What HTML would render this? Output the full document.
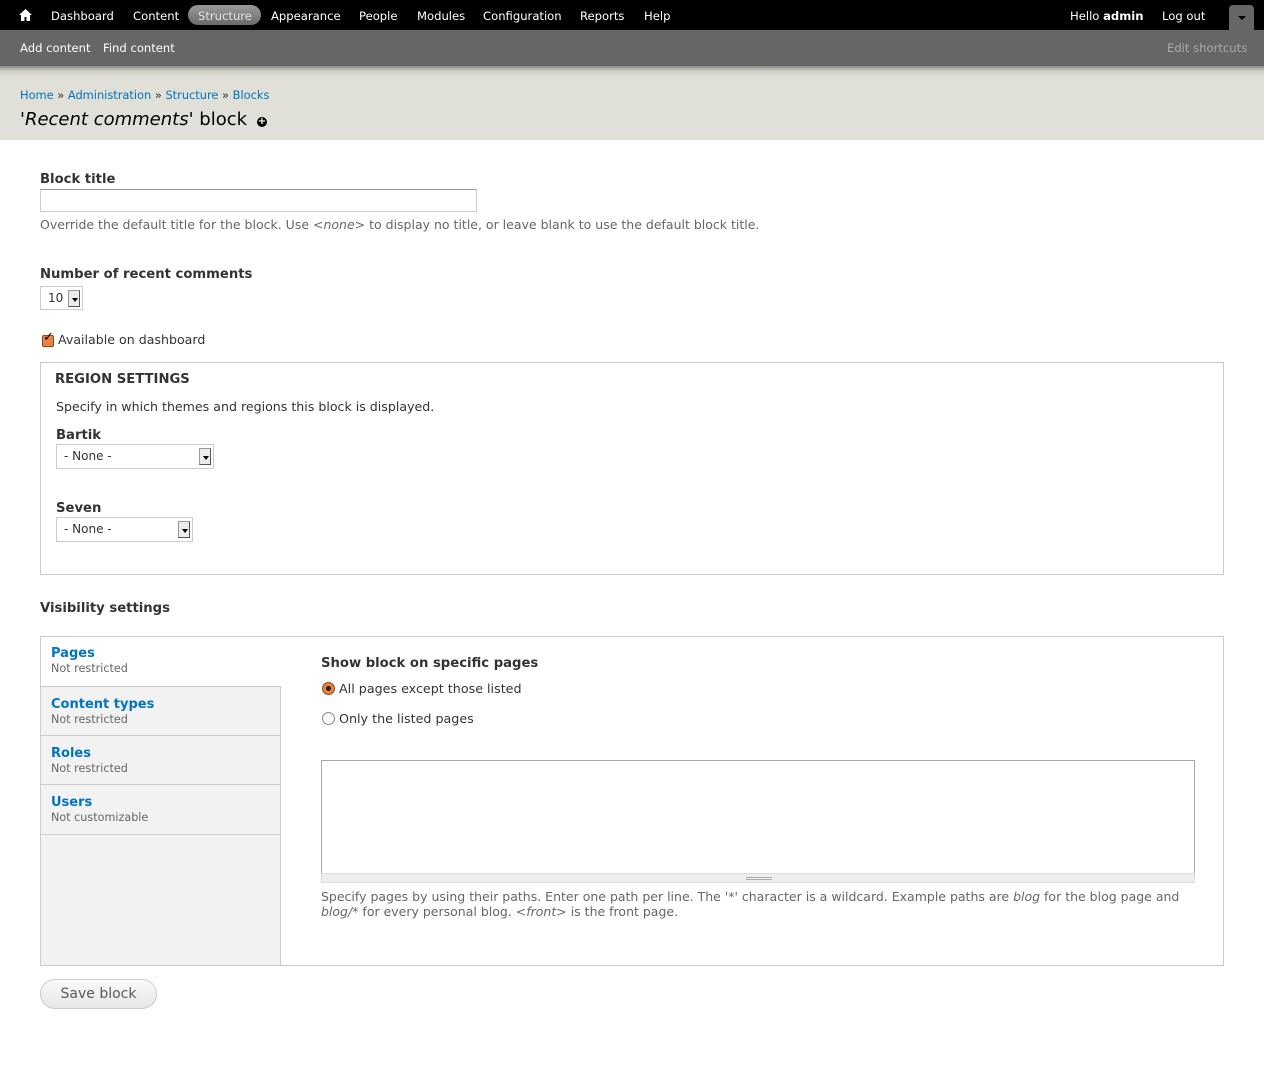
<!DOCTYPE html>
<html><head><style>
*{box-sizing:border-box}
body{margin:0;width:1264px;height:1076px;background:#fff;font-family:"DejaVu Sans","Liberation Sans",sans-serif;color:#333;font-size:13px;position:relative;overflow:hidden}
.a{position:absolute;white-space:nowrap}
#tb{position:absolute;left:0;top:0;width:1264px;height:30px;background:#000}
#tb .a{color:#fff;font-size:11.6px;top:9px}
#sc{position:absolute;left:0;top:30px;width:1264px;height:36px;background:#666}
#sh{position:absolute;left:0;top:66px;width:1264px;height:74px;background:linear-gradient(#8a8a86 0,#cfcfc8 5px,#e0e0d8 12px,#e0e0d8 100%)}
.lbl{font-weight:bold;font-size:13.2px;color:#333}
.desc{font-size:12.5px;color:#666}
.sel{position:absolute;border:1px solid #ccc;background:#fff;font-size:12px;color:#333}
.sel .ar{position:absolute;right:2px;top:3px;width:12px;height:17px;background:#ececec;border:1px solid #999;border-right-color:#555;border-bottom-color:#555}
.sel .ar:after{content:"";position:absolute;left:3px;top:7px;border-left:3px solid transparent;border-right:3px solid transparent;border-top:4px solid #000}
.tab{position:absolute;left:41px;width:240px;border-top:1px solid #ccc;background:#f2f2f2;padding:10px 10px 8px}
.tab b{color:#0074bd;font-size:13px;display:block}
.tab span{font-size:11.2px;color:#666}
</style></head><body>
<div id="tb">
<svg class="a" style="left:19px;top:9px" width="13" height="12" viewBox="0 0 13 12"><path d="M6.5 0L0 6h2v6h3.5V8h2v4H11V6h2z" fill="#fff"/></svg>
<div class="a" style="left:51px">Dashboard</div>
<div class="a" style="left:133px">Content</div>
<div class="a" style="left:188px;top:5px;width:73px;height:20px;border-radius:10px;background:linear-gradient(#9a9a9a,#6a6a6a);"></div>
<div class="a" style="left:198px;color:#e4e4e4">Structure</div>
<div class="a" style="left:271px">Appearance</div>
<div class="a" style="left:359px">People</div>
<div class="a" style="left:417px">Modules</div>
<div class="a" style="left:483px">Configuration</div>
<div class="a" style="left:580px">Reports</div>
<div class="a" style="left:644px">Help</div>
<div class="a" style="left:1070px">Hello <b>admin</b></div>
<div class="a" style="left:1162px">Log out</div>
<div class="a" style="left:1229px;top:5px;width:25px;height:25px;background:#666;border-radius:4px 4px 0 0"></div>
<div class="a" style="left:1238px;top:16px;border-left:4px solid transparent;border-right:4px solid transparent;border-top:4px solid #000"></div>
</div>
<div id="sc">
<div class="a" style="left:20px;top:11px;color:#fff;font-size:11.6px">Add content</div>
<div class="a" style="left:103px;top:11px;color:#fff;font-size:11.6px">Find content</div>
<div class="a" style="left:1167px;top:11px;color:#aaa;font-size:11.6px">Edit shortcuts</div>
</div>
<div id="sh"></div>
<div class="a" style="left:20px;top:88px;font-size:11.4px;color:#333"><span style="color:#0074bd">Home</span> » <span style="color:#0074bd">Administration</span> » <span style="color:#0074bd">Structure</span> » <span style="color:#0074bd">Blocks</span></div>
<div class="a" style="left:20px;top:109px;font-size:18px;color:#000">'<i>Recent comments</i>' block</div>
<div class="a" style="left:257px;top:117px;width:10px;height:10px;border-radius:50%;background:#000;color:#fff;font-size:10px;line-height:10px;text-align:center;font-weight:bold">+</div>

<div class="a lbl" style="left:40px;top:172px">Block title</div>
<div class="a" style="left:40px;top:189px;width:437px;height:23px;border:1px solid #ccc;border-top-color:#999"></div>
<div class="a desc" style="left:40px;top:217px">Override the default title for the block. Use <i>&lt;none&gt;</i> to display no title, or leave blank to use the default block title.</div>

<div class="a lbl" style="left:40px;top:267px">Number of recent comments</div>
<div class="sel" style="left:40px;top:286px;width:43px;height:24px"><span class="a" style="left:7px;top:4px">10</span><div class="ar"></div></div>

<div class="a" style="left:42px;top:335px;width:12px;height:12px;background:#e8823e;border:1px solid #8a4a20;border-radius:2px"></div>
<div class="a" style="left:43px;top:330px;font-size:13px;color:#000;font-weight:bold">✓</div>
<div class="a" style="left:58px;top:332px;font-size:12.6px">Available on dashboard</div>

<div class="a" style="left:40px;top:362px;width:1184px;height:213px;border:1px solid #ccc"></div>
<div class="a lbl" style="left:55px;top:372px">REGION SETTINGS</div>
<div class="a" style="left:56px;top:399px;font-size:12.6px">Specify in which themes and regions this block is displayed.</div>
<div class="a lbl" style="left:56px;top:428px">Bartik</div>
<div class="sel" style="left:56px;top:444px;width:158px;height:25px"><span class="a" style="left:7px;top:4px">- None -</span><div class="ar"></div></div>
<div class="a lbl" style="left:56px;top:501px">Seven</div>
<div class="sel" style="left:56px;top:517px;width:137px;height:25px"><span class="a" style="left:7px;top:4px">- None -</span><div class="ar"></div></div>

<div class="a lbl" style="left:40px;top:601px">Visibility settings</div>
<div class="a" style="left:40px;top:636px;width:1184px;height:330px;border:1px solid #ccc"></div>
<div class="a" style="left:41px;top:637px;width:240px;height:328px;background:#f2f2f2;border-right:1px solid #ccc"></div>
<div class="tab" style="top:637px;height:49px;background:#fff;border-top:none;width:241px;padding-top:9px"><b>Pages</b><span>Not restricted</span></div>
<div class="tab" style="top:686px;height:49px;border-right:1px solid #ccc"><b>Content types</b><span>Not restricted</span></div>
<div class="tab" style="top:735px;height:49px;border-right:1px solid #ccc"><b>Roles</b><span>Not restricted</span></div>
<div class="tab" style="top:784px;height:50px;border-right:1px solid #ccc"><b>Users</b><span>Not customizable</span></div>
<div class="a" style="left:41px;top:834px;width:240px;border-top:1px solid #ccc"></div>

<div class="a lbl" style="left:321px;top:656px">Show block on specific pages</div>
<div class="a" style="left:322px;top:682px;width:13px;height:13px;border-radius:50%;background:#e8823e;border:1px solid #8a4a20"></div>
<div class="a" style="left:326px;top:686px;width:5px;height:5px;border-radius:50%;background:#222"></div>
<div class="a" style="left:339px;top:681px;font-size:12.7px">All pages except those listed</div>
<div class="a" style="left:322px;top:712px;width:13px;height:13px;border-radius:50%;background:#fafafa;border:1px solid #888"></div>
<div class="a" style="left:339px;top:711px;font-size:12.7px">Only the listed pages</div>
<div class="a" style="left:321px;top:760px;width:874px;height:115px;border:1px solid #aaa;border-bottom:none"></div>
<div class="a" style="left:321px;top:873px;width:874px;height:10px;background:#eee;border:1px solid #ddd"></div>
<div class="a" style="left:746px;top:877px;width:26px;height:3px;border-top:1px solid #aaa;border-bottom:1px solid #aaa"></div>
<div class="a desc" style="left:321px;top:889px;line-height:15px">Specify pages by using their paths. Enter one path per line. The '*' character is a wildcard. Example paths are <i>blog</i> for the blog page and<br><i>blog/*</i> for every personal blog. <i>&lt;front&gt;</i> is the front page.</div>

<div class="a" style="left:40px;top:979px;width:117px;height:30px;border-radius:15px;border:1px solid #ccc;background:linear-gradient(#fafafa,#e6e6e6);color:#5a5a5a;font-size:14px;text-align:center;line-height:29px">Save block</div>
</body></html>
